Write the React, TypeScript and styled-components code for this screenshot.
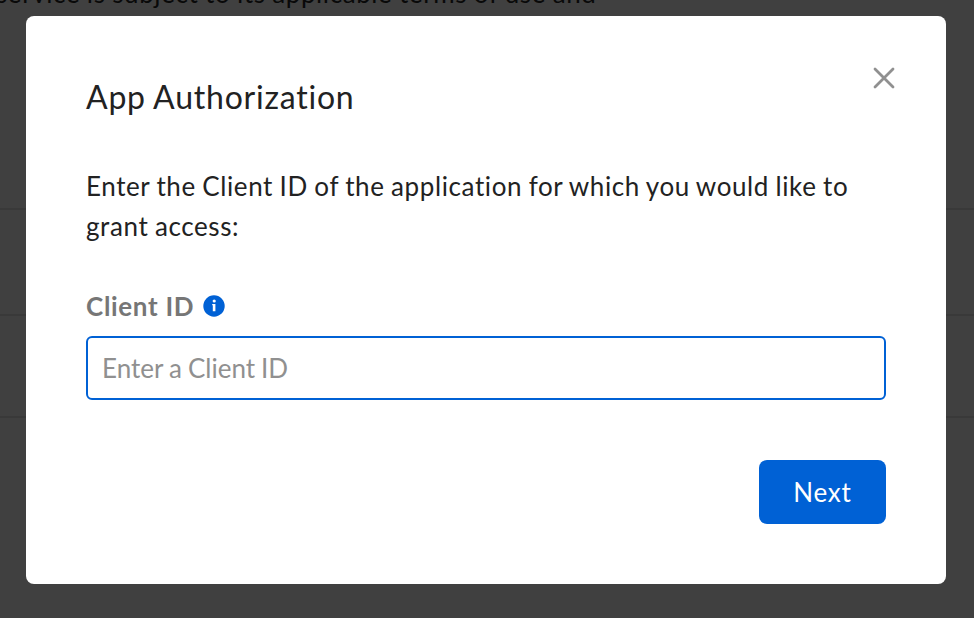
import React from "react";
import styled, { createGlobalStyle } from "styled-components";

const GlobalStyle = createGlobalStyle`
  * { box-sizing: border-box; }
  body { margin: 0; overflow: hidden; background: #404040; font-family: Lato, sans-serif; }
`;
const Page = styled.div`
  position: relative;
  height: 618px;
  overflow: hidden;
`;
const Backdrop = styled.div`
  height: 618px;
  display: grid;
  grid-template-rows: 210px 106px 102px 1fr;
`;
const BackdropRow = styled.div`
  border-bottom: 2px solid #393939;
`;
const Terms = styled.p`
  margin: -23px 0 0 -4px;
  color: #090909;
  font-size: 26px;
  line-height: 32px;
  letter-spacing: 0.6px;
  word-spacing: -0.6px;
  white-space: nowrap;
`;
const Dialog = styled.section`
  position: absolute;
  top: 16px;
  left: 26px;
  width: 920px;
  height: 568px;
  padding: 60px;
  display: flex;
  flex-direction: column;
  background: #fff;
  border-radius: 8px;
  color: #222;
`;
const Header = styled.header`
  display: flex;
  justify-content: space-between;
  height: 44px;
`;
const Title = styled.h1`
  margin: -1px 0 0;
  font-size: 32px;
  line-height: 44px;
  font-weight: 400;
  letter-spacing: 0.78px;
  word-spacing: -0.6px;
`;
const Close = styled.button`
  width: 24px;
  height: 24px;
  margin: -10px -10px 0 0;
  padding: 0;
  border: 0;
  background: none;
  svg { display: block; }
`;
const Message = styled.p`
  margin: 46px 0 0;
  font-size: 26px;
  line-height: 40px;
  letter-spacing: 0.6px;
  word-spacing: -0.72px;
`;
const Label = styled.label`
  display: flex;
  align-items: center;
  gap: 9px;
  height: 40px;
  margin: 40px 0 10px;
  color: #767676;
  font-size: 26px;
  font-weight: 700;
  letter-spacing: 0.68px;
`;
const Input = styled.input`
  width: 100%;
  height: 64px;
  padding: 0 14px;
  border: 2px solid #0061d5;
  border-radius: 6px;
  outline: none;
  font: 400 26px Lato, sans-serif;
  word-spacing: -0.6px;
  &::placeholder { color: #909090; opacity: 1; }
`;
const Footer = styled.footer`
  display: flex;
  justify-content: flex-end;
  margin-top: 60px;
`;
const NextButton = styled.button`
  width: 127px;
  height: 64px;
  padding: 0;
  border: 0;
  border-radius: 8px;
  background: #0061d5;
  color: #fff;
  font: 400 26px Lato, sans-serif;
  letter-spacing: 0.8px;
`;

export default function App() {
  return (
    <Page>
      <GlobalStyle />
      <Backdrop>
        <BackdropRow><Terms>service is subject to its applicable terms of use and</Terms></BackdropRow>
        <BackdropRow />
        <BackdropRow />
      </Backdrop>
      <Dialog role="dialog">
        <Header>
          <Title>App Authorization</Title>
          <Close aria-label="Close">
            <svg width="24" height="24" viewBox="0 0 24 24" fill="none" stroke="#909090" strokeWidth="2.8" strokeLinecap="round">
              <path d="M3 3 21 21M21 3 3 21" />
            </svg>
          </Close>
        </Header>
        <Message>Enter the Client ID of the application for which you would like to grant access:</Message>
        <Label htmlFor="client-id">
          Client ID
          <svg width="22" height="22" viewBox="0 0 22 22">
            <circle cx="11" cy="11" r="10.7" fill="#0061d5" />
            <circle cx="11.2" cy="6" r="1.6" fill="#fff" />
            <path d="M9.2 9h3.2v7.3h-2.6v-6h-.6Z" fill="#fff" />
          </svg>
        </Label>
        <Input id="client-id" placeholder="Enter a Client ID" />
        <Footer><NextButton>Next</NextButton></Footer>
      </Dialog>
    </Page>
  );
}
